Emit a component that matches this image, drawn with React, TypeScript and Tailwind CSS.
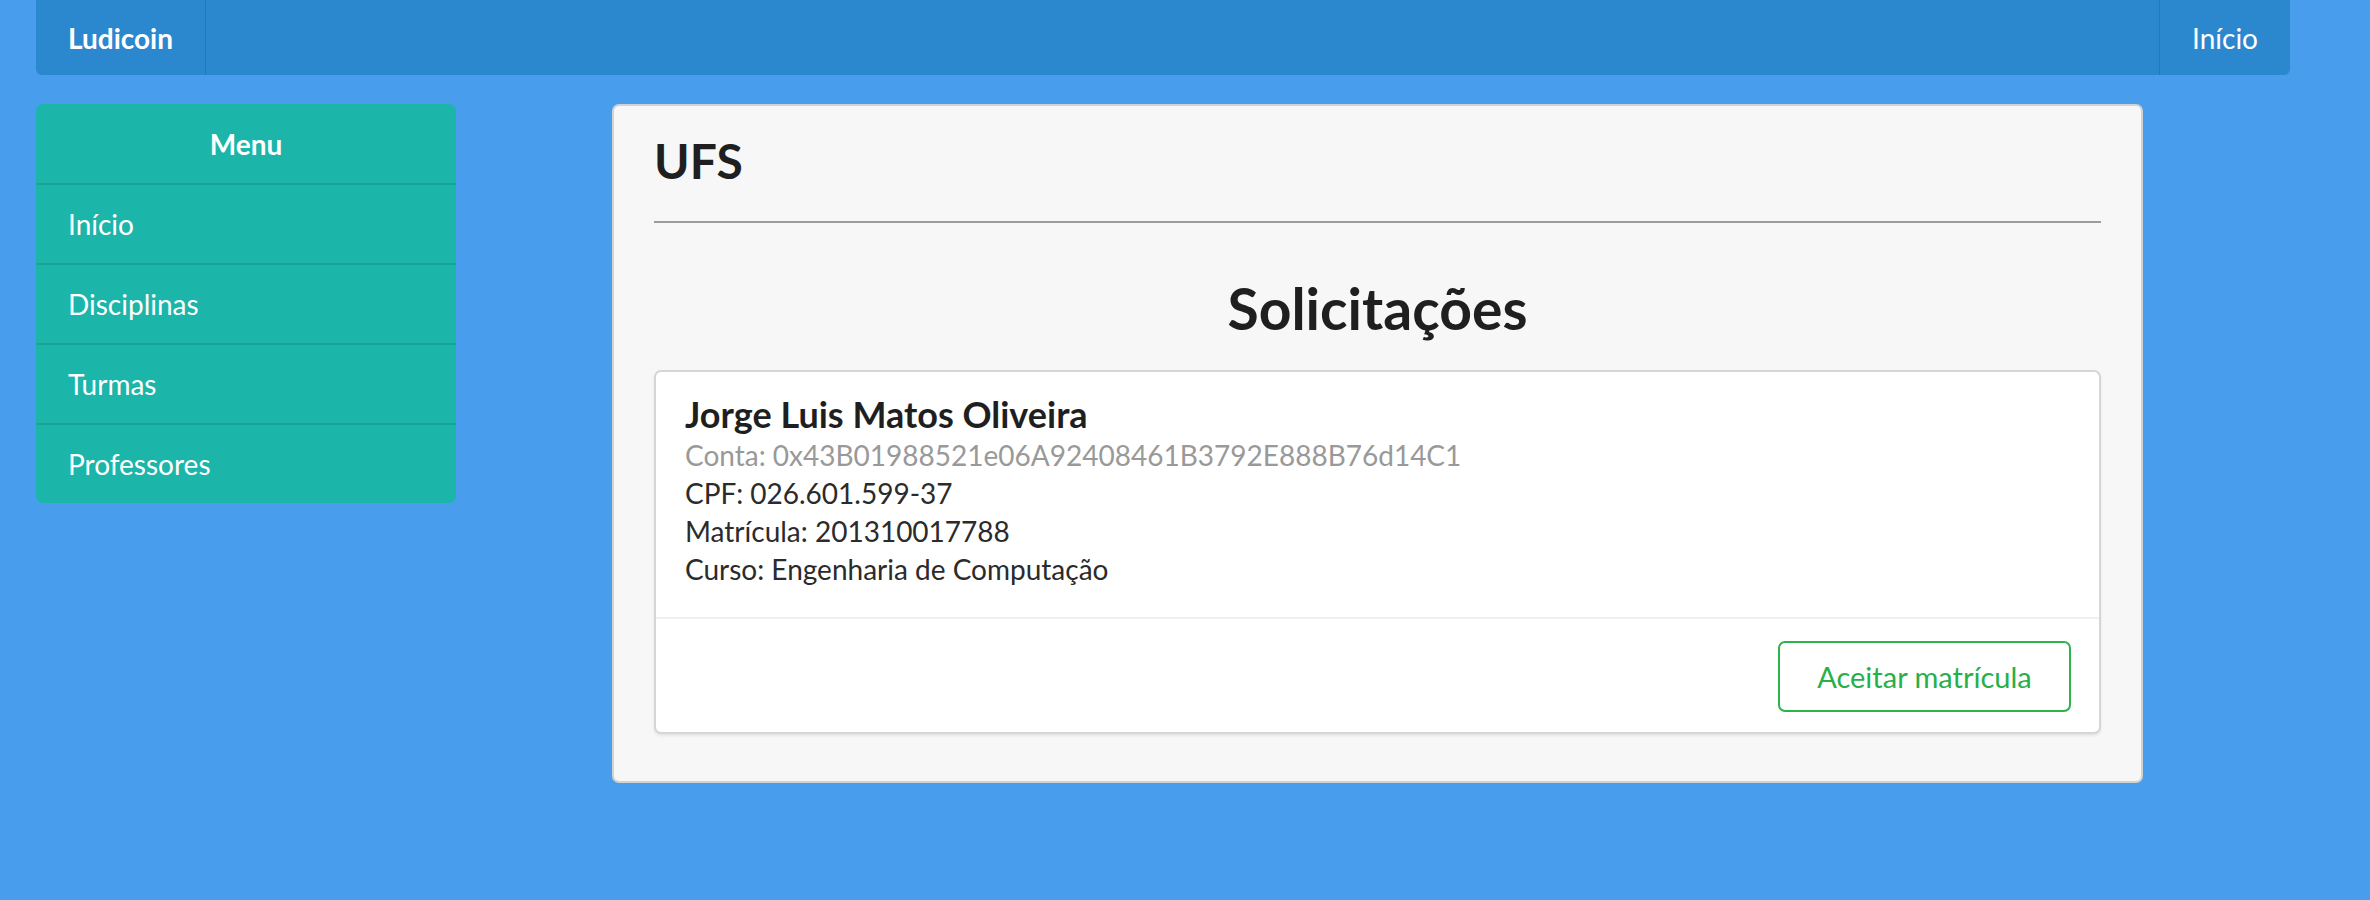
import React from "react";

export default function App() {
  const menu = ["Início", "Disciplinas", "Turmas", "Professores"];
  return (
    <div
      className="min-h-[900px] w-full bg-[#489ded]"
      style={{ fontFamily: "Lato, 'Noto Sans', sans-serif" }}
    >
      <div className="pl-[36px] pr-[80px]">
        <nav className="flex h-[75px] items-stretch rounded-b-[6px] bg-[#2b88ce] text-white">
          <div className="flex items-center border-r border-[#2479bd] px-[32px] text-[28px] font-bold">
            Ludicoin
          </div>
          <div className="flex-1" />
          <div className="flex items-center border-l border-[#2479bd] px-[32px] text-[28px]">
            Início
          </div>
        </nav>
      </div>

      <div className="flex items-start pl-[36px] pt-[29px]">
        <aside className="w-[420px] overflow-hidden rounded-[7px] bg-[#1bb5aa] text-white">
          <div className="flex h-[81px] items-center justify-center border-b-2 border-[#18a499] text-[28px] font-bold">
            Menu
          </div>
          {menu.map((m, i) => (
            <div
              key={m}
              className={
                i < menu.length - 1
                  ? "flex h-[80px] items-center border-b-2 border-[#18a499] px-[32px] text-[28px]"
                  : "flex h-[78px] items-center px-[32px] text-[28px]"
              }
            >
              {m}
            </div>
          ))}
        </aside>

        <main className="ml-[156px] w-[1531px] rounded-[7px] border-2 border-[#d2d2d2] bg-[#f7f7f7] px-[40px] pb-[47px] pt-[22px]">
          <h1 className="text-[48px] font-bold leading-[66px] text-[#1f1f1f]">UFS</h1>
          <div className="mt-[27px] h-[2px] bg-[#9c9c9c]" />
          <h2 className="mt-[45px] text-center text-[57px] font-bold leading-[80px] text-[#1f1f1f]">
            Solicitações
          </h2>
          <div className="mt-[22px] overflow-hidden rounded-[7px] border-2 border-[#d6d6d6] bg-white shadow-[0_2px_3px_rgba(0,0,0,0.08)]">
            <div className="px-[29px] pb-[29px] pt-[20px] text-[28px] leading-[38px] text-[#2b2b2b]">
              <div className="text-[36px] font-bold leading-[44px] text-[#1f1f1f]">
                Jorge Luis Matos Oliveira
              </div>
              <div className="text-[#999999]">Conta: 0x43B01988521e06A92408461B3792E888B76d14C1</div>
              <div>CPF: 026.601.599-37</div>
              <div>Matrícula: 201310017788</div>
              <div>Curso: Engenharia de Computação</div>
            </div>
            <div className="flex justify-end border-t-2 border-[#f0f0f0] px-[28px] pb-[20px] pt-[22px]">
              <button className="flex h-[71px] w-[293px] items-center justify-center rounded-[7px] border-2 border-[#2cb44b] bg-white text-[29px] text-[#27b049]">
                Aceitar matrícula
              </button>
            </div>
          </div>
        </main>
      </div>
    </div>
  );
}
